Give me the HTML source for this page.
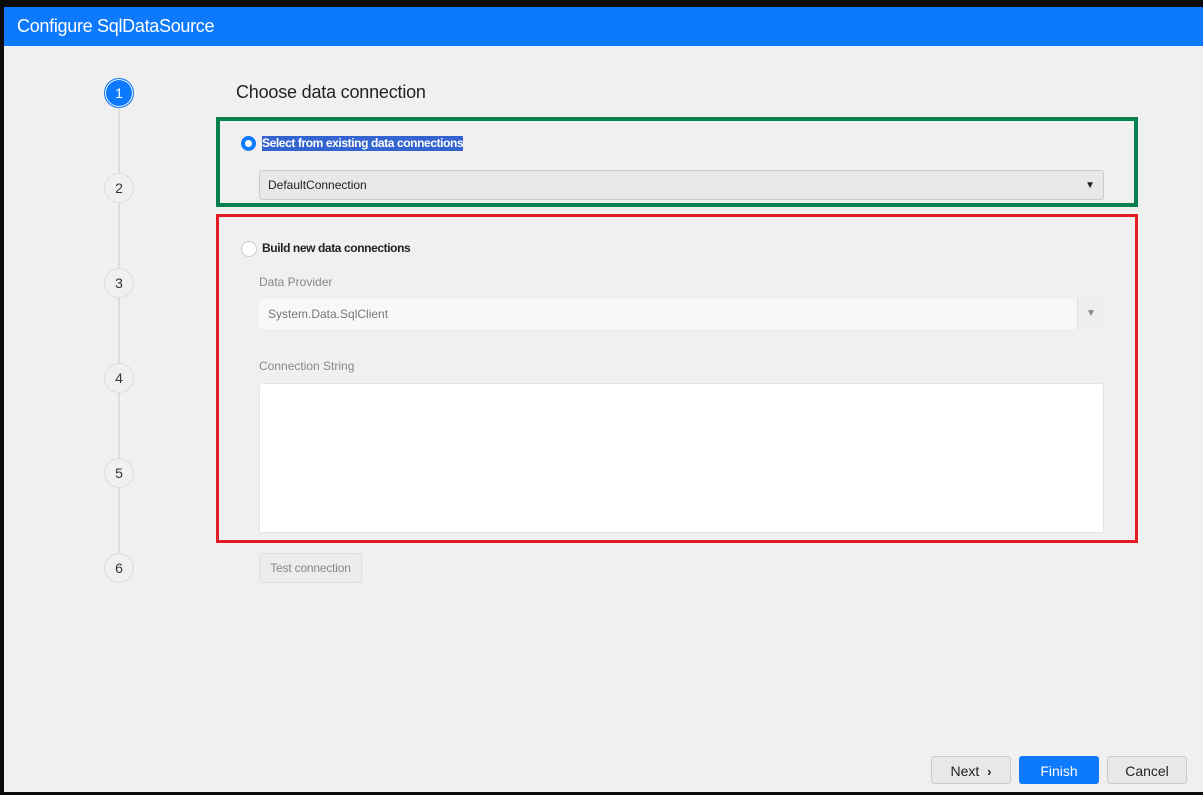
<!DOCTYPE html>
<html><head><style>
body{margin:0;width:1203px;height:795px;background:#0b0b0b;position:relative;overflow:hidden;font-family:"Liberation Sans",Arial,sans-serif}
#dlg{position:absolute;left:4px;top:7px;width:1199px;height:785px;background:#f0f0f0}
#hdr{position:absolute;left:0;top:0;width:1199px;height:39px;background:#0d79fc;color:#fff;font-size:18px;letter-spacing:-0.3px;line-height:39px;padding-left:13px;box-sizing:border-box}
.a{position:absolute}
.step{position:absolute;left:100px;width:28px;height:28px;border:1px solid #ddd;border-radius:50%;background:#f0f0f0;text-align:center;line-height:28px;font-size:14px;color:#333}
.line{position:absolute;left:114px;width:2px;background:#ddd}
.btn{position:absolute;top:749px;height:28px;border:1px solid #ccc;border-radius:3px;background:#e8e8e8;font-size:14px;line-height:28px;text-align:center;color:#222;box-sizing:border-box}
</style></head><body>
<div id="dlg">
<div id="hdr">Configure SqlDataSource</div>
<div class="line" style="top:100px;height:460px"></div>
<div class="step" style="top:71px;background:#0d79fc;border:1px solid #0d79fc;color:#fff;box-shadow:0 0 0 1px #fff inset">1</div>
<div class="step" style="top:166px">2</div>
<div class="step" style="top:261px">3</div>
<div class="step" style="top:356px">4</div>
<div class="step" style="top:451px">5</div>
<div class="step" style="top:546px">6</div>
<div class="a" style="left:232px;top:75px;font-size:18px;color:#222;letter-spacing:-0.2px">Choose data connection</div>
<div class="a" style="left:212px;top:110px;width:922px;height:90px;border:4px solid #04814f;box-sizing:border-box"></div>
<div class="a" style="left:237px;top:129px;width:15px;height:15px;border-radius:50%;background:#0d79fc"><div class="a" style="left:4px;top:4px;width:7px;height:7px;border-radius:50%;background:#fff"></div></div>
<div class="a" style="left:258px;top:129px;height:15px;line-height:15px;background:#3464d0;color:#fff;font-size:12px;letter-spacing:-0.4px;font-weight:bold">Select from existing data connections</div>
<div class="a" style="left:255px;top:163px;width:845px;height:30px;border:1px solid #ccc;border-radius:3px;background:#e8e8e8;box-sizing:border-box;font-size:12px;line-height:28px;padding-left:8px;color:#222">DefaultConnection<span class="a" style="right:8px;top:1px;font-size:10px">▼</span></div>
<div class="a" style="left:212px;top:207px;width:922px;height:329px;border:3px solid #e41c23;box-sizing:border-box"></div>
<div class="a" style="left:237px;top:234px;width:14px;height:14px;border-radius:50%;background:#fff;border:1px solid #ccc"></div>
<div class="a" style="left:258px;top:234px;font-size:12px;font-weight:bold;color:#222;line-height:15px;letter-spacing:-0.4px">Build new data connections</div>
<div class="a" style="left:255px;top:268px;font-size:12px;color:#888">Data Provider</div>
<div class="a" style="left:255px;top:292px;width:845px;height:30px;border-radius:3px;background:#f8f8f8;box-sizing:border-box;font-size:12px;line-height:30px;padding-left:9px;color:#777">System.Data.SqlClient<span class="a" style="right:0;top:0;width:26px;height:30px;border-left:1px solid #ddd;background:#eee;text-align:center;font-size:10px;color:#888">▼</span></div>
<div class="a" style="left:255px;top:352px;font-size:12px;color:#888">Connection String</div>
<div class="a" style="left:255px;top:376px;width:845px;height:150px;background:#fff;border:1px solid #e4e4e4;border-radius:3px;box-sizing:border-box"></div>
<div class="a" style="left:255px;top:546px;width:103px;height:30px;border:1px solid #ddd;border-radius:3px;background:#ececec;box-sizing:border-box;font-size:12px;color:#888;text-align:center;line-height:28px;letter-spacing:-0.2px">Test connection</div>
<div class="btn" style="left:927px;width:80px">Next&nbsp; <b style="font-size:13px">›</b></div>
<div class="btn" style="left:1015px;width:80px;background:#0d79fc;border-color:#0d79fc;color:#fff">Finish</div>
<div class="btn" style="left:1103px;width:80px">Cancel</div>
</div>
</body></html>
